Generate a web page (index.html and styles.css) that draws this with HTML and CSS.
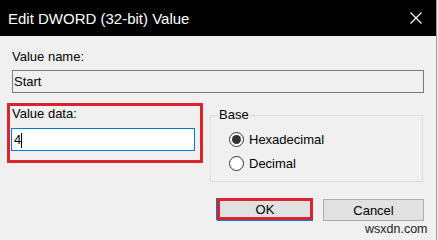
FILE: index.html
```html
<!DOCTYPE html>
<html lang="en">
<head>
    <meta charset="UTF-8">
    <title>Edit DWORD (32-bit) Value</title>
    <link rel="stylesheet" href="styles.css">
</head>
<body>

    <div class="window">
        <!-- title bar -->
        <div class="titlebar">
            <span class="title">Edit DWORD (32-bit) Value</span>
            <svg class="close" width="12" height="12" viewBox="0 0 12 12">
                <path d="M0.5 0.5L11.5 11.5M11.5 0.5L0.5 11.5" stroke="#fff" stroke-width="1.2" fill="none"/>
            </svg>
        </div>

        <div class="content">
            <div class="label">Value name:</div>
            <div class="field readonly">Start</div>

            <div class="row">
                <!-- highlighted value data group -->
                <div class="data-group">
                    <div class="label">Value data:</div>
                    <div class="field active">4<span class="caret"></span></div>
                </div>

                <fieldset class="base">
                    <legend>Base</legend>
                    <div class="radio"><span class="dot checked"></span>Hexadecimal</div>
                    <div class="radio"><span class="dot"></span>Decimal</div>
                </fieldset>
            </div>

            <div class="buttons">
                <button class="btn ok">OK</button>
                <button class="btn cancel">Cancel</button>
            </div>
        </div>

        <div class="watermark">wsxdn.com</div>
    </div>

</body>
</html>
```

FILE: styles.css
```css
body {
    margin: 0;
    background-color: #f0f0f0;
    font-family: "Liberation Sans", Arial, sans-serif;
    font-size: 13px;
    color: #000;
    width: 438px;
    height: 240px;
    overflow: hidden;
}

.window {
    position: relative;
    width: 436px;
    height: 240px;
    border-right: 1px solid #9a9a9a;
}

/* title bar */
.titlebar {
    height: 36px;
    background-color: #000;
    color: #fff;
    display: flex;
    align-items: center;
    justify-content: space-between;
    padding: 0 14px 0 8px;
}

.title {
    font-size: 15px;
}

.content {
    padding: 13px 12px 0 12px;
}

.label {
    line-height: 16px;
    margin-bottom: 5px;
}

.field {
    box-sizing: border-box;
    height: 23px;
    line-height: 21px;
    border: 1px solid #7a7a7a;
    padding-left: 1px;
}

.field.active {
    background-color: #fff;
    border-color: #0078d7;
    padding-left: 2px;
    width: 184px;
    margin-left: 1px;
}

.caret {
    display: inline-block;
    width: 1px;
    height: 15px;
    background-color: #000;
    vertical-align: middle;
    margin-left: 0;
}

.row {
    display: flex;
    align-items: flex-start;
    margin-top: 10px;
}

/* red annotation box */
.data-group {
    box-sizing: border-box;
    width: 196px;
    margin-left: -5px;
    border: 3px solid #d9232d;
    padding: 0 0 9px 0;
}

.data-group .label {
    padding-left: 2px;
    margin-bottom: 6px;
}

.base {
    box-sizing: border-box;
    width: 213px;
    margin: 4px 0 0 7px;
    border: 1px solid #dcdcdc;
    padding: 4px 0 6px 18px;
}

.base legend {
    line-height: 16px;
    padding: 0 1px;
    margin-left: -11px;
}

.radio {
    display: flex;
    align-items: center;
    height: 24px;
}

.dot {
    box-sizing: border-box;
    width: 15px;
    height: 15px;
    border: 1px solid #333;
    border-radius: 50%;
    background-color: #fff;
    margin-right: 5px;
    display: flex;
    align-items: center;
    justify-content: center;
}

.dot.checked::after {
    content: "";
    width: 9px;
    height: 9px;
    border-radius: 50%;
    background-color: #333;
}

.buttons {
    display: flex;
    justify-content: flex-end;
    align-items: flex-start;
    gap: 10px;
    margin-top: 16px;
}

.btn {
    box-sizing: border-box;
    height: 22px;
    padding: 0;
    font-family: inherit;
    font-size: 13px;
    color: #000;
    background-color: #e1e1e1;
    border: 1px solid #adadad;
}

.btn.ok {
    width: 96px;
    border: 3px solid #d9232d;
    box-shadow: 0 1px 0 #0078d7, -1px 0 0 #0078d7;
}

.btn.cancel {
    width: 101px;
    margin-top: 1px;
}

.watermark {
    position: absolute;
    left: 365px;
    top: 222px;
    font-size: 12.5px;
    line-height: 15px;
    color: #222;
}
```
